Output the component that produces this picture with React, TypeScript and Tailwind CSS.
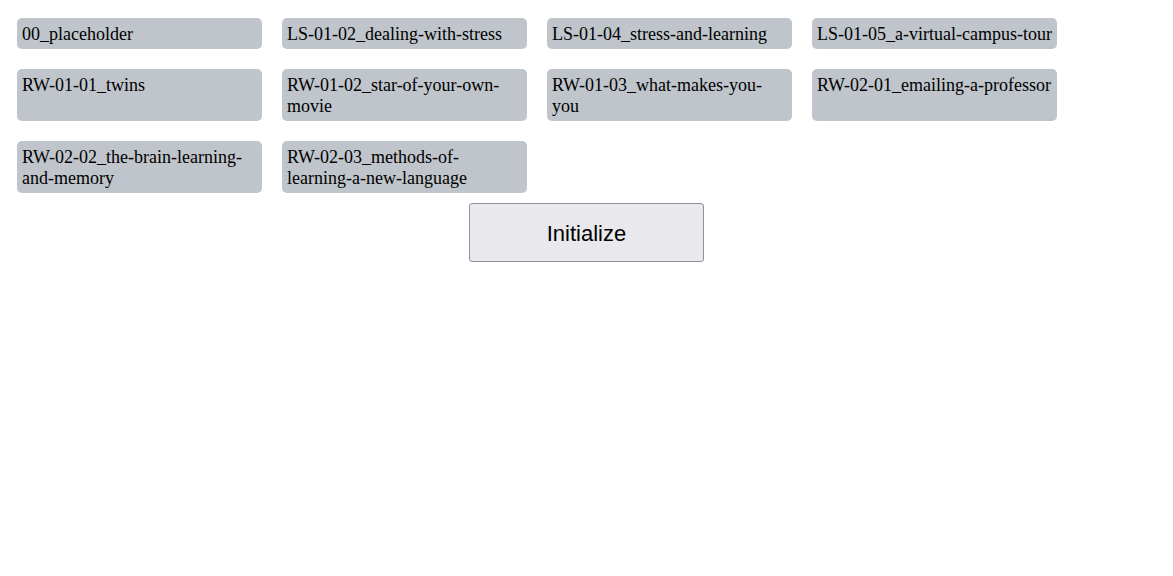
const ITEMS = [
  '00_placeholder',
  'LS-01-02_dealing-with-stress',
  'LS-01-04_stress-and-learning',
  'LS-01-05_a-virtual-campus-tour',
  'RW-01-01_twins',
  'RW-01-02_star-of-your-own-movie',
  'RW-01-03_what-makes-you-you',
  'RW-02-01_emailing-a-professor',
  'RW-02-02_the-brain-learning-and-memory',
  'RW-02-03_methods-of-learning-a-new-language',
];

export default function App() {
  return (
    <div className="min-h-screen bg-white pt-[18px]">
      {/* Lesson tiles */}
      <div className="grid grid-cols-[repeat(4,245px)] gap-x-5 gap-y-5 px-[17px]">
        {ITEMS.map((item) => (
          <div
            key={item}
            className="rounded-[5px] bg-[#bfc5cb] px-[5px] pt-[6px] pb-[4px] font-['Liberation_Serif',serif] text-[18px] leading-[21px] text-black"
          >
            {item}
          </div>
        ))}
      </div>

      {/* Init */}
      <div className="mt-[10px] flex justify-center">
        <button className="h-[59px] w-[235px] rounded-[3px] border border-[#8f8f9d] bg-[#e9e9ed] pt-[2px] font-['Liberation_Sans',sans-serif] text-[22px] text-black">
          Initialize
        </button>
      </div>
    </div>
  );
}
